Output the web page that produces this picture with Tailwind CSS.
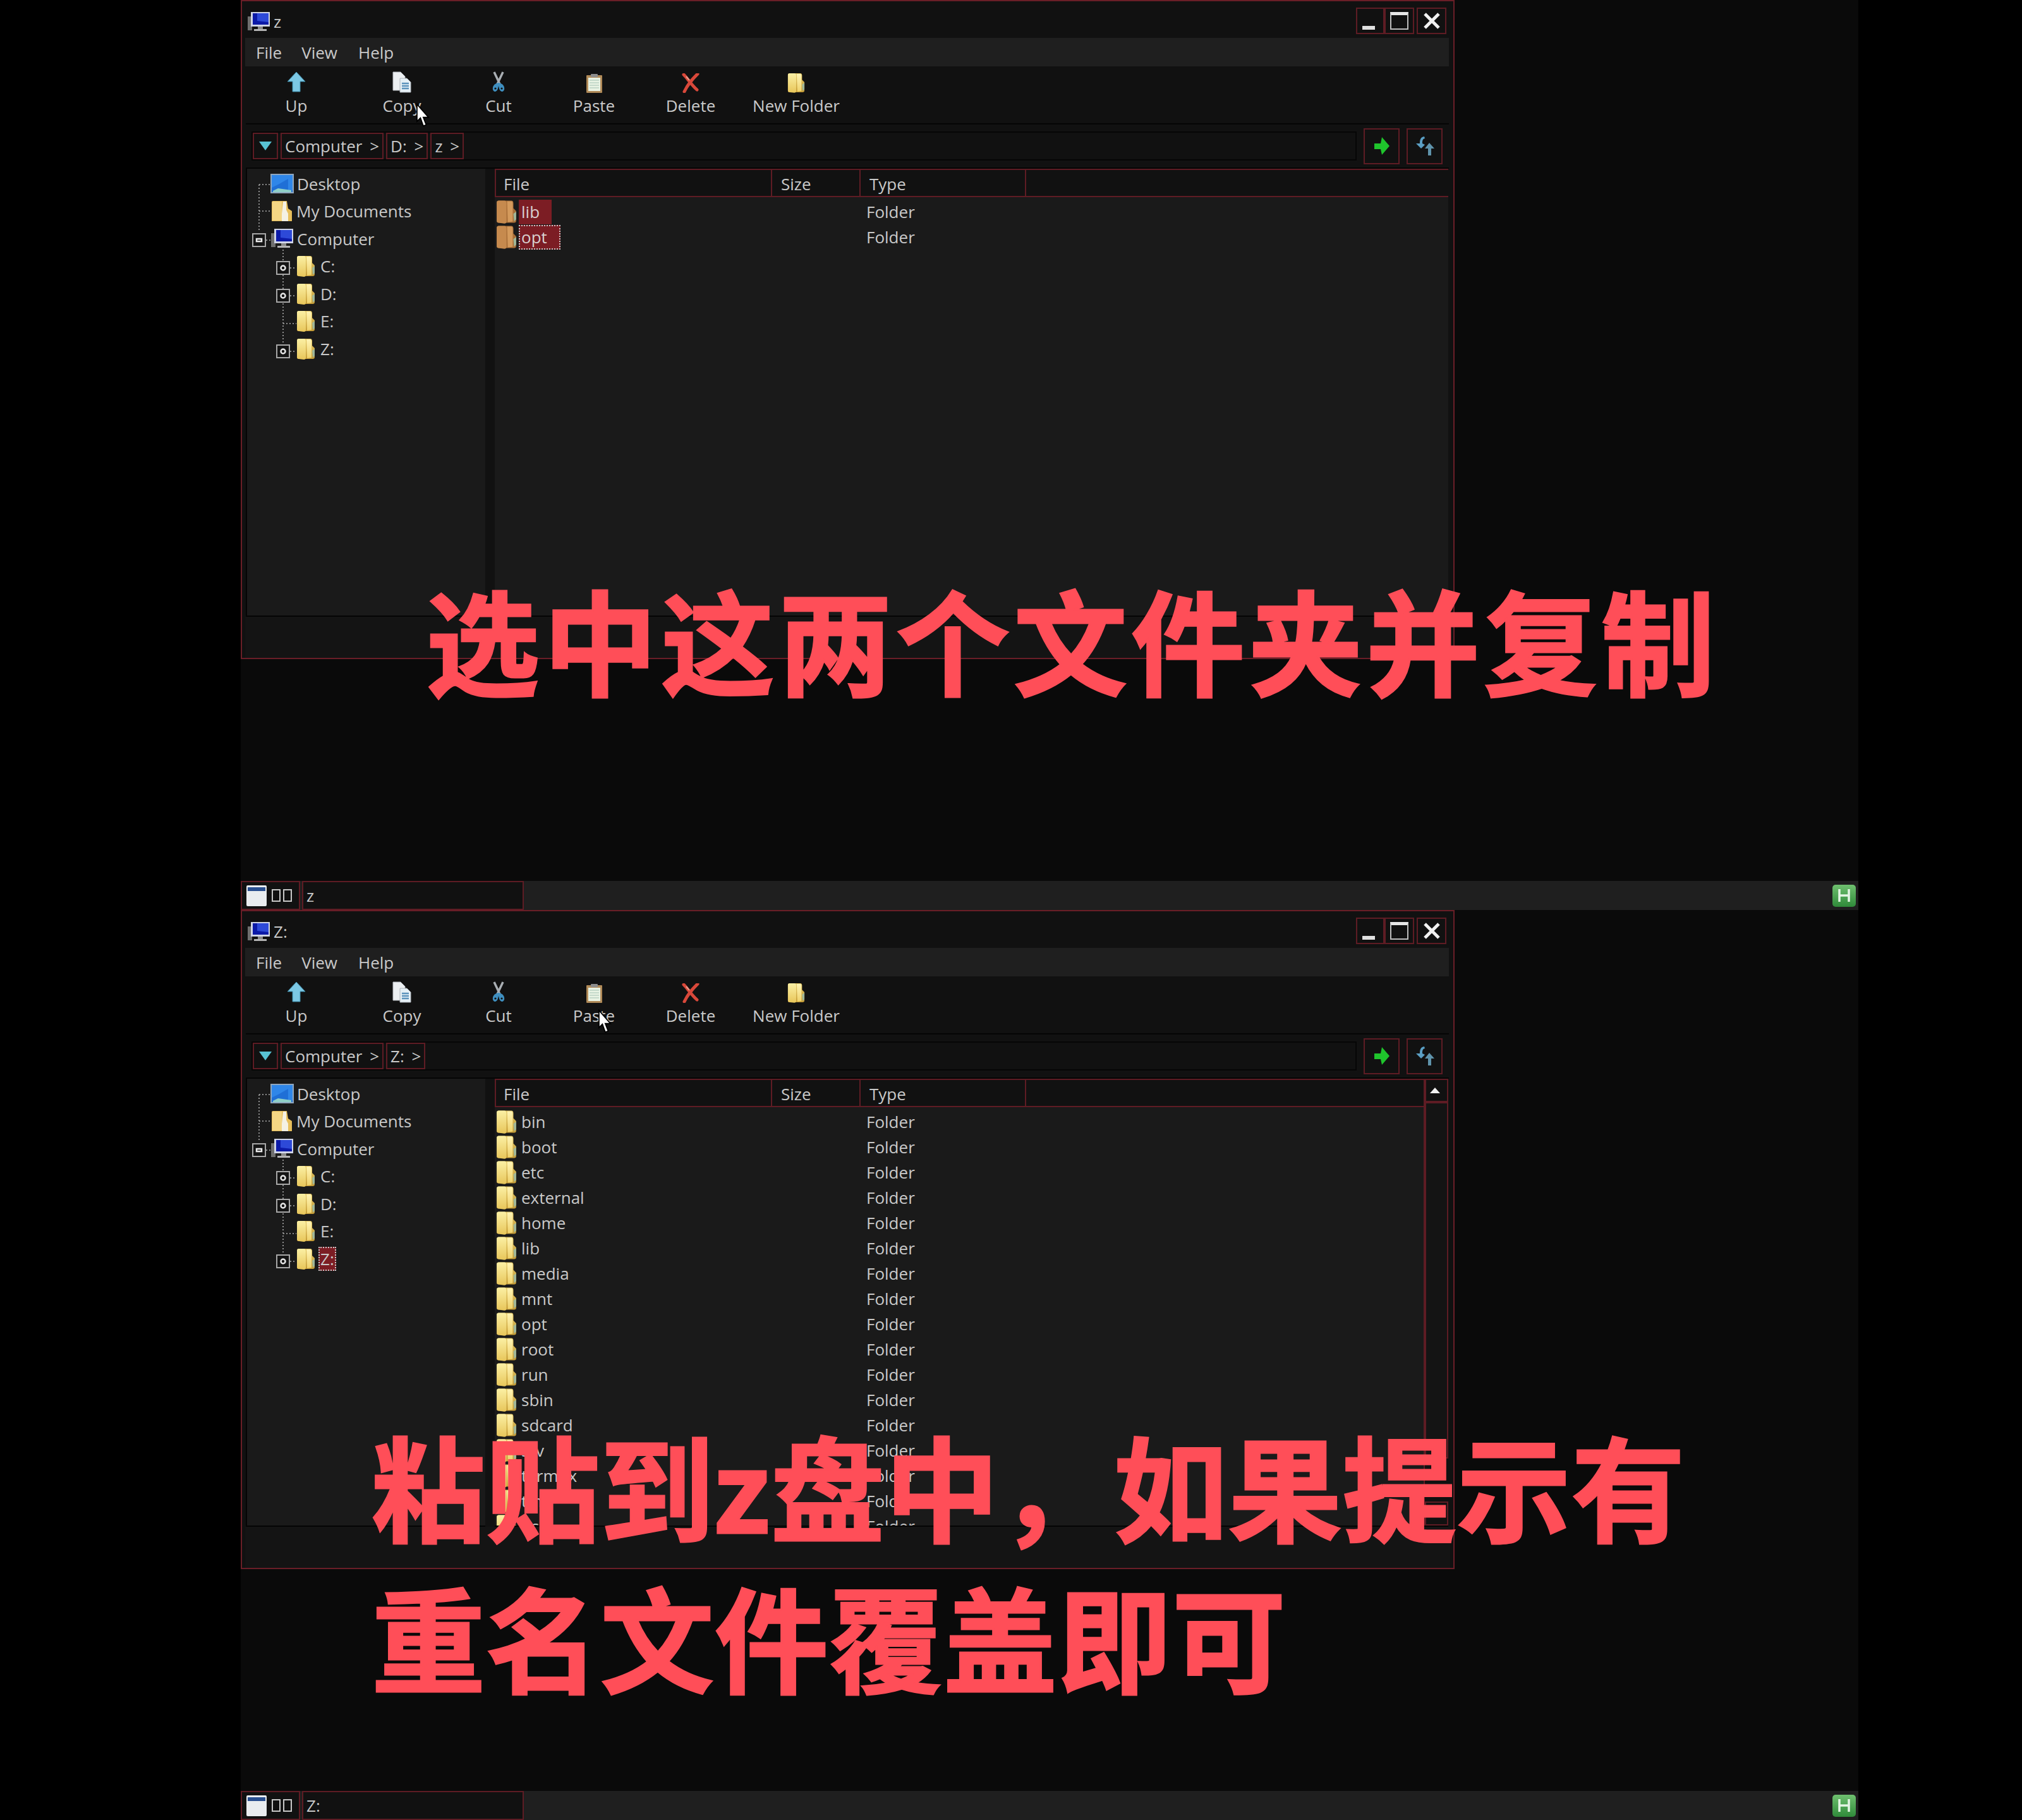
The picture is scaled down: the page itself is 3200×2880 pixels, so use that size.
<!DOCTYPE html>
<html lang="zh">
<head>
  <meta charset="UTF-8" />
  <title>File Manager</title>
  <script src="https://cdn.jsdelivr.net/npm/@tailwindcss/browser@4"></script>
</head>
<body class="bg-black font-['Open_Sans','Noto_Sans_CJK_SC',sans-serif] text-[#c9c9c9] text-[26px] leading-none">
  <svg class="absolute" width="0" height="0">
    <defs>
      <linearGradient id="folderLight" x1="0" y1="0" x2="0" y2="1"><stop offset="0" stop-color="#fbf0a4"/><stop offset="1" stop-color="#e8c65a"/></linearGradient>
      <linearGradient id="folderDark" x1="0" y1="0" x2="0" y2="1"><stop offset="0" stop-color="#e4c766"/><stop offset="1" stop-color="#c39a35"/></linearGradient>
      <linearGradient id="folderMid" x1="0" y1="0" x2="0" y2="1"><stop offset="0" stop-color="#fff4b4"/><stop offset="1" stop-color="#efd26c"/></linearGradient>
      <linearGradient id="badgeGreen" x1="0" y1="0" x2="0" y2="1"><stop offset="0" stop-color="#6fc06f"/><stop offset="1" stop-color="#2f8a3a"/></linearGradient>
    </defs>
  </svg>
  <div id="app" class="ml-[381px] w-[2560px] bg-[#0a0a0a]"></div>

  <script>
    const folderIcon = (w, h, a = 'url(#folderLight)', b = 'url(#folderDark)', c = 'url(#folderMid)') => `
      <svg class="shrink-0" width="${w}" height="${h}" viewBox="0 0 30 34">
        <path d="M1 4 Q1 1 4 1 L22 1 Q25 1 25 5 L25 12 L29 16 L29 30 Q29 33 26 33 L4 33 Q1 33 1 30 Z" fill="${b}"/>
        <path d="M1 4 Q1 1 4 1 L12 1 Q15 1 15 5 L15 31 Q15 34 12 34 L4 33 Q1 33 1 30 Z" fill="${a}"/>
        <path d="M16 2 L22 2 Q24 2 24 6 L24 31 L17 32 Z" fill="${c}"/>
        <path d="M25 20 L29 17 L29 28 L26 31 Z" fill="#9fb79a"/>
      </svg>`;

    const computerIcon = `
      <svg class="shrink-0" width="36" height="33" viewBox="0 0 36 33">
        <rect x="0" y="8" width="7" height="22" fill="#6f6f6f"/>
        <rect x="5" y="1" width="30" height="23" fill="#cfd4e6"/>
        <rect x="8" y="3" width="25" height="18" fill="#2d49d8"/>
        <path d="M8 3 L15 3 L15 15 L33 17 L33 21 L8 21 Z" fill="#0c1aa8"/>
        <rect x="16" y="24" width="8" height="4" fill="#8a8a8a"/>
        <rect x="10" y="28" width="20" height="3" fill="#b5b5b5"/>
      </svg>`;

    const desktopIcon = `
      <svg class="shrink-0" width="37" height="31" viewBox="0 0 37 31">
        <rect x="0" y="0" width="37" height="31" fill="#8fa6bd"/>
        <rect x="2" y="2" width="33" height="27" fill="#1f6fd6"/>
        <path d="M2 2 L35 2 L35 26 L28 26 L28 8 L14 16 L2 22 Z" fill="#2f86e8"/>
        <path d="M4 27 L12 23 L33 26 L33 29 L4 29 Z" fill="#8fd0c8"/>
      </svg>`;

    const docsIcon = `
      <svg class="shrink-0" width="32" height="33" viewBox="0 0 32 33">
        <path d="M0 2 Q0 0 2 0 L24 0 L26 12 L32 16 L32 32 L0 32 Z" fill="#e7bf5c"/>
        <path d="M1 1 L16 1 L16 31 L1 31 Z" fill="#f4d684"/>
        <path d="M18 1 L23 1 L23 14 L26 20 L26 32 L16 32 L16 20 Z" fill="#f4f1e4"/>
      </svg>`;

    const toolIcons = {
      up: `<svg width="30" height="34" viewBox="0 0 30 34"><path d="M15 1 L29 16 L21 16 L21 32 L9 32 L9 16 L1 16 Z" fill="#7cc8e4" stroke="#3d8aa8"/></svg>`,
      copy: `<svg width="30" height="34" viewBox="0 0 30 34"><path d="M1 1 L13 1 L20 8 L20 30 L1 30 Z" fill="#eceff2" stroke="#b8bcc2"/><path d="M12 11 L23 11 L29 17 L29 33 L12 33 Z" fill="#e6f0f6" stroke="#b0b6bc"/><path d="M15 19 H26 M15 23 H26 M15 27 H26" stroke="#5c93bd" stroke-width="2.5"/></svg>`,
      cut: `<svg width="22" height="34" viewBox="0 0 22 34"><path d="M4 1 L13 20 M18 1 L9 20" stroke="#a9aeb3" stroke-width="3.5"/><path d="M11 18 C4 19 1 24 2 29 C4 34 9 32 10 27 L11 23 L12 27 C13 32 18 34 20 29 C21 24 18 19 11 18 Z" fill="#3f8fc0"/><circle cx="6" cy="27" r="1.6" fill="#111"/><circle cx="16" cy="27" r="1.6" fill="#111"/></svg>`,
      paste: `<svg width="25" height="30" viewBox="0 0 25 30"><rect x="0" y="2" width="25" height="28" rx="1" fill="#b08a58"/><rect x="3" y="6" width="19" height="21" fill="#e9f3e4"/><path d="M5 10 H20 M5 14 H20 M5 18 H20 M5 22 H20" stroke="#b9d2c2" stroke-width="1.5"/><rect x="7" y="0" width="11" height="5" rx="1" fill="#8d8d8d"/></svg>`,
      del: `<svg width="28" height="31" viewBox="0 0 28 31"><path d="M3 2 C9 8 15 18 24 26 M25 1 C18 8 10 16 4 29" fill="none" stroke="#d9483a" stroke-width="5" stroke-linecap="round"/><path d="M7 5 L12 11" stroke="#e9a090" stroke-width="2"/></svg>`,
    };

    const goIcon = `<svg width="26" height="30" viewBox="0 0 26 30"><path d="M13 1 L25 15 L13 29 L11 20 L1 20 L1 11 L11 11 Z" fill="#1fc42c"/></svg>`;
    const swapIcon = `<svg width="30" height="32" viewBox="0 0 30 32"><path d="M14 1 C8 2 7 6 7 12 L1 12 L9 20 L15 14 L11 12 C11 8 11 5 15 4 Z" fill="#5b9fc4"/><path d="M22 11 L30 20 L25 20 L25 31 L20 31 L20 20 L15 20 Z" fill="#5f93ab"/></svg>`;

    const cursor = (left, top) => `
      <svg class="absolute" style="left:${left}px;top:${top}px" width="22" height="40" viewBox="0 0 12 22">
        <path d="M1 1 L1 16 L4 13 L6.5 20 L9 19 L6.5 12.5 L11 12.5 Z" fill="#fff" stroke="#000" stroke-width="1"/>
      </svg>`;

    const buildWindow = ({ title, crumbs, files, scroll, selectedTree, selectedFiles, selectedCut, cursorAt }) => {
      const tools = [
        { label: 'Up', icon: toolIcons.up, w: 'w-[154px]' },
        { label: 'Copy', icon: toolIcons.copy, w: 'w-[180px]' },
        { label: 'Cut', icon: toolIcons.cut, w: 'w-[126px]' },
        { label: 'Paste', icon: toolIcons.paste, w: 'w-[176px]' },
        { label: 'Delete', icon: toolIcons.del, w: 'w-[130px]' },
        { label: 'New Folder', icon: folderIcon(28, 32), w: 'w-[204px]' },
      ];

      const toolbar = tools.map(t => `
        <div class="${t.w} flex flex-col items-center">
          <div class="h-[36px] flex items-end">${t.icon}</div>
          <span class="mt-[7px]">${t.label}</span>
        </div>`).join('');

      const crumbCells = crumbs.map(c => `
        <div class="h-[42px] flex items-center px-[5px] [word-spacing:5px] border-2 border-[#5e1c24] ml-[4px]">${c}</div>`).join('');

      const rows = files.map(name => {
        let cls = 'px-[4px]';
        if (selectedFiles && name === 'lib') cls = 'px-[4px] w-[52px] bg-[#7c1d24] text-[#d8d0d0]';
        if (selectedFiles && name === 'opt') cls = 'px-[4px] w-[66px] bg-[#7c1d24] text-[#d8d0d0] outline-2 outline-dotted outline-[#c9c9c9] -outline-offset-2';
        const icon = selectedCut ? folderIcon(33, 38, '#c68a4e', '#a96f38', '#d49a5c') : folderIcon(33, 38);
        return `
        <div class="h-[40px] shrink-0 flex items-center text-[26px]">
          <div class="w-[437px] h-full flex items-center pl-[2px]">
            ${icon}
            <span class="ml-[3px] h-[39px] flex items-center ${cls}">${name}</span>
          </div>
          <div class="w-[140px]"></div>
          <div class="pl-[11px]">Folder</div>
        </div>`;
      }).join('');

      const treeTop = [
        { icon: desktopIcon, label: 'Desktop', pad: 'pl-[37px]', gap: 'ml-[5px]' },
        { icon: docsIcon, label: 'My Documents', pad: 'pl-[39px]', gap: 'ml-[7px]' },
        { icon: computerIcon, label: 'Computer', pad: 'pl-[38px]', gap: 'ml-[5px]' },
      ].map(r => `
        <div class="h-[43.5px] flex items-center ${r.pad}">${r.icon}<span class="${r.gap}">${r.label}</span></div>`).join('');

      const treeDrives = ['C:', 'D:', 'E:', 'Z:'].map(d => `
        <div class="h-[43.5px] flex items-center pl-[78px]">
          ${folderIcon(30, 34)}
          <span class="ml-[5px] h-[38px] flex items-center px-[3px] ${selectedTree === d ? 'bg-[#7c1d24] outline-2 outline-dotted outline-[#c9c9c9] -outline-offset-2' : ''}">${d}</span>
        </div>`).join('');

      return `
      <div class="w-[1921px] h-[1043px] border-2 border-[#6a1e27] bg-[#111111] flex flex-col relative shrink-0">
        <div class="h-[58px] flex items-center relative">
          <div class="ml-[9px] mt-[6px]">${computerIcon}</div>
          <span class="ml-[5px] mt-[6px]">${title}</span>
          <div class="ml-auto mr-[11px] mt-[3px] flex">
            <div class="w-[45px] h-[42px] border-2 border-[#5e1c24] flex items-end justify-center pb-[5px] pr-[6px]"><div class="w-[20px] h-[6px] bg-[#e0e0e0]"></div></div>
            <div class="w-[47px] h-[42px] border-2 border-[#5e1c24] flex items-center justify-center"><div class="w-[29px] h-[28px] border-2 border-[#bdbdbd] border-t-[5px] border-t-[#e8e8e8]"></div></div>
            <div class="ml-[4px] w-[47px] h-[42px] border-2 border-[#5e1c24] flex items-center justify-center">
              <svg width="28" height="28" viewBox="0 0 28 28"><path d="M3 3 L25 25 M25 3 L3 25" stroke="#f2f2f2" stroke-width="5"/></svg>
            </div>
          </div>
        </div>

        <div class="h-[45px] mx-[5px] mr-[7px] bg-[#1f1f1f] flex items-center pl-[17px]">
          <span>File</span><span class="ml-[31px]">View</span><span class="ml-[33px]">Help</span>
        </div>

        <div class="h-[90px] pl-[9px] flex items-start pt-[6px]">${toolbar}</div>

        <div class="h-[72px] ml-[6px] mr-[7px] border-y-2 border-[#050505] flex items-center pl-[9px]">
          <div class="flex-1 h-[46px] border-2 border-[#060606] flex items-center">
            <div class="h-[42px] w-[40px] border-2 border-[#5e1c24] flex items-center justify-center">
              <svg width="20" height="16" viewBox="0 0 20 16"><path d="M0 1 H20 L10 15 Z" fill="#58c3d4"/></svg>
            </div>
            ${crumbCells}
          </div>
          <div class="ml-[11px] w-[57px] h-[57px] border-2 border-[#5e1c24] flex items-center justify-center">${goIcon}</div>
          <div class="ml-[11px] mr-[10px] w-[57px] h-[57px] border-2 border-[#5e1c24] flex items-center justify-center">${swapIcon}</div>
        </div>

        <div class="h-[709px] ml-[6px] mr-[8px] flex">
          <div class="w-[379px] bg-[#1a1a1a] border-l-2 border-b-2 border-[#050505] pt-[2px] relative">
            ${treeTop}${treeDrives}
            <svg class="absolute left-0 top-0" width="100" height="320" viewBox="0 0 100 320" fill="none">
              <g stroke="#8c8c8c" stroke-width="2" stroke-dasharray="2 3">
                <path d="M19 25 V100 M19 25 H37 M19 67 H39 M30 113 H38 M57 128 V276 M68 157 H78 M68 201 H78 M57 245 H78 M68 289 H78"/>
              </g>
              <g stroke="#a8a8a8" stroke-width="2" fill="#141414">
                <rect x="9" y="103" width="20" height="20"/>
                <rect x="47" y="147" width="20" height="20"/>
                <rect x="47" y="191" width="20" height="20"/>
                <rect x="47" y="279" width="20" height="20"/>
              </g>
              <g fill="#141414" stroke="#e6e6e6" stroke-width="2.5">
                <rect x="15" y="111" width="8" height="4"/>
                <circle cx="57" cy="157" r="3.5"/>
                <circle cx="57" cy="201" r="3.5"/>
                <circle cx="57" cy="289" r="3.5"/>
              </g>
            </svg>
          </div>
          <div class="w-[15px] bg-[#111111]"></div>
          <div class="flex-1 flex min-w-0 border-b-2 border-[#050505]">
            <div class="flex-1 min-w-0 flex flex-col bg-[#1a1a1a] ${scroll ? 'border-r-2 border-[#5e1c24]' : ''} overflow-hidden">
              <div class="h-[45px] shrink-0 mb-[3px] flex bg-[#111111] border-b-2 border-t-2 border-[#5e1c24] pt-[2px]">
                <div class="w-[437px] border-l-2 border-[#5e1c24] -mt-[2px] flex items-center pl-[12px] pt-[2px]">File</div>
                <div class="w-[140px] border-l-2 border-[#5e1c24] -mt-[2px] flex items-center pl-[14px] pt-[2px]">Size</div>
                <div class="w-[262px] border-l-2 border-[#5e1c24] -mt-[2px] flex items-center pl-[14px] pt-[2px]">Type</div>
                <div class="flex-1 border-l-2 border-[#5e1c24] -mt-[2px]"></div>
              </div>
              ${rows}
            </div>
            ${scroll ? `
            <div class="w-[37px] shrink-0 flex flex-col bg-[#111111]">
              <div class="h-[37px] border-2 border-[#5e1c24] flex items-center justify-center pr-[5px]">
                <svg width="16" height="9" viewBox="0 0 16 9"><path d="M8 0 L16 9 H0 Z" fill="#f0f0f0"/></svg>
              </div>
              <div class="h-[564px] border-2 border-[#5e1c24] bg-[#141414]"></div>
              <div class="flex-1"></div>
              <div class="h-[38px] border-2 border-[#5e1c24]"></div>
            </div>` : ''}
          </div>
        </div>

        <div class="flex-1 bg-[#141414] ml-[5px] mr-[5px]"></div>
        ${cursor(cursorAt[0], cursorAt[1])}
      </div>`;
    };

    const taskbar = (title) => `
      <div class="mt-auto h-[46px] bg-[#1f1f1f] flex items-stretch">
        <div class="w-[94px] bg-[#111111] border-2 border-[#5e1c24] flex items-center pl-[7px]">
          <div class="w-[32px] h-[33px] rounded-[2px] bg-[#e9ecef] pt-[3px] px-[2px]"><div class="h-[6px] bg-[#2a4f8f]"></div></div>
          <div class="ml-[8px] w-[14px] h-[20px] border-2 border-[#c8c8c8]"></div>
          <div class="ml-[4px] w-[14px] h-[20px] border-2 border-[#c8c8c8]"></div>
        </div>
        <div class="ml-[3px] w-[351px] bg-[#111111] border-2 border-[#5e1c24] flex items-center pl-[5px]">${title}</div>
        <svg class="ml-auto mr-[4px] self-center" width="37" height="35" viewBox="0 0 37 35">
          <rect width="37" height="35" rx="5" fill="url(#badgeGreen)"/>
          <path d="M11 7 V27 M26 7 V27 M11 17 H26" stroke="#e4f5e4" stroke-width="3.5" fill="none"/>
        </svg>
      </div>`;

    const zFiles = ['bin', 'boot', 'etc', 'external', 'home', 'lib', 'media', 'mnt', 'opt', 'root', 'run', 'sbin', 'sdcard', 'srv', 'termux', 'tmp', 'usr'];

    document.getElementById('app').innerHTML = `
      <section class="relative h-[1440px] flex flex-col">
        ${buildWindow({ title: 'z', crumbs: ['Computer &gt;', 'D: &gt;', 'z &gt;'], files: ['lib', 'opt'], scroll: false, selectedFiles: true, selectedCut: true, cursorAt: [275, 161] })}
        ${taskbar('z')}
        <div class="absolute left-[293px] top-[918px] text-[180px] leading-[200px] font-bold [-webkit-text-stroke:3px_#ff4e58] tracking-[6px] text-[#ff4e58] whitespace-nowrap">选中这两个文件夹并复制</div>
      </section>
      <section class="relative h-[1440px] flex flex-col">
        ${buildWindow({ title: 'Z:', crumbs: ['Computer &gt;', 'Z: &gt;'], files: zFiles, scroll: true, selectedTree: 'Z:', cursorAt: [563, 155] })}
        ${taskbar('Z:')}
        <div class="absolute left-[207px] top-[797px] text-[180px] leading-[239px] font-bold [-webkit-text-stroke:3px_#ff4e58] tracking-[1px] text-[#ff4e58] whitespace-nowrap">粘贴到z盘中，如果提示有<br>重名文件覆盖即可</div>
      </section>`;
  </script>
</body>
</html>
